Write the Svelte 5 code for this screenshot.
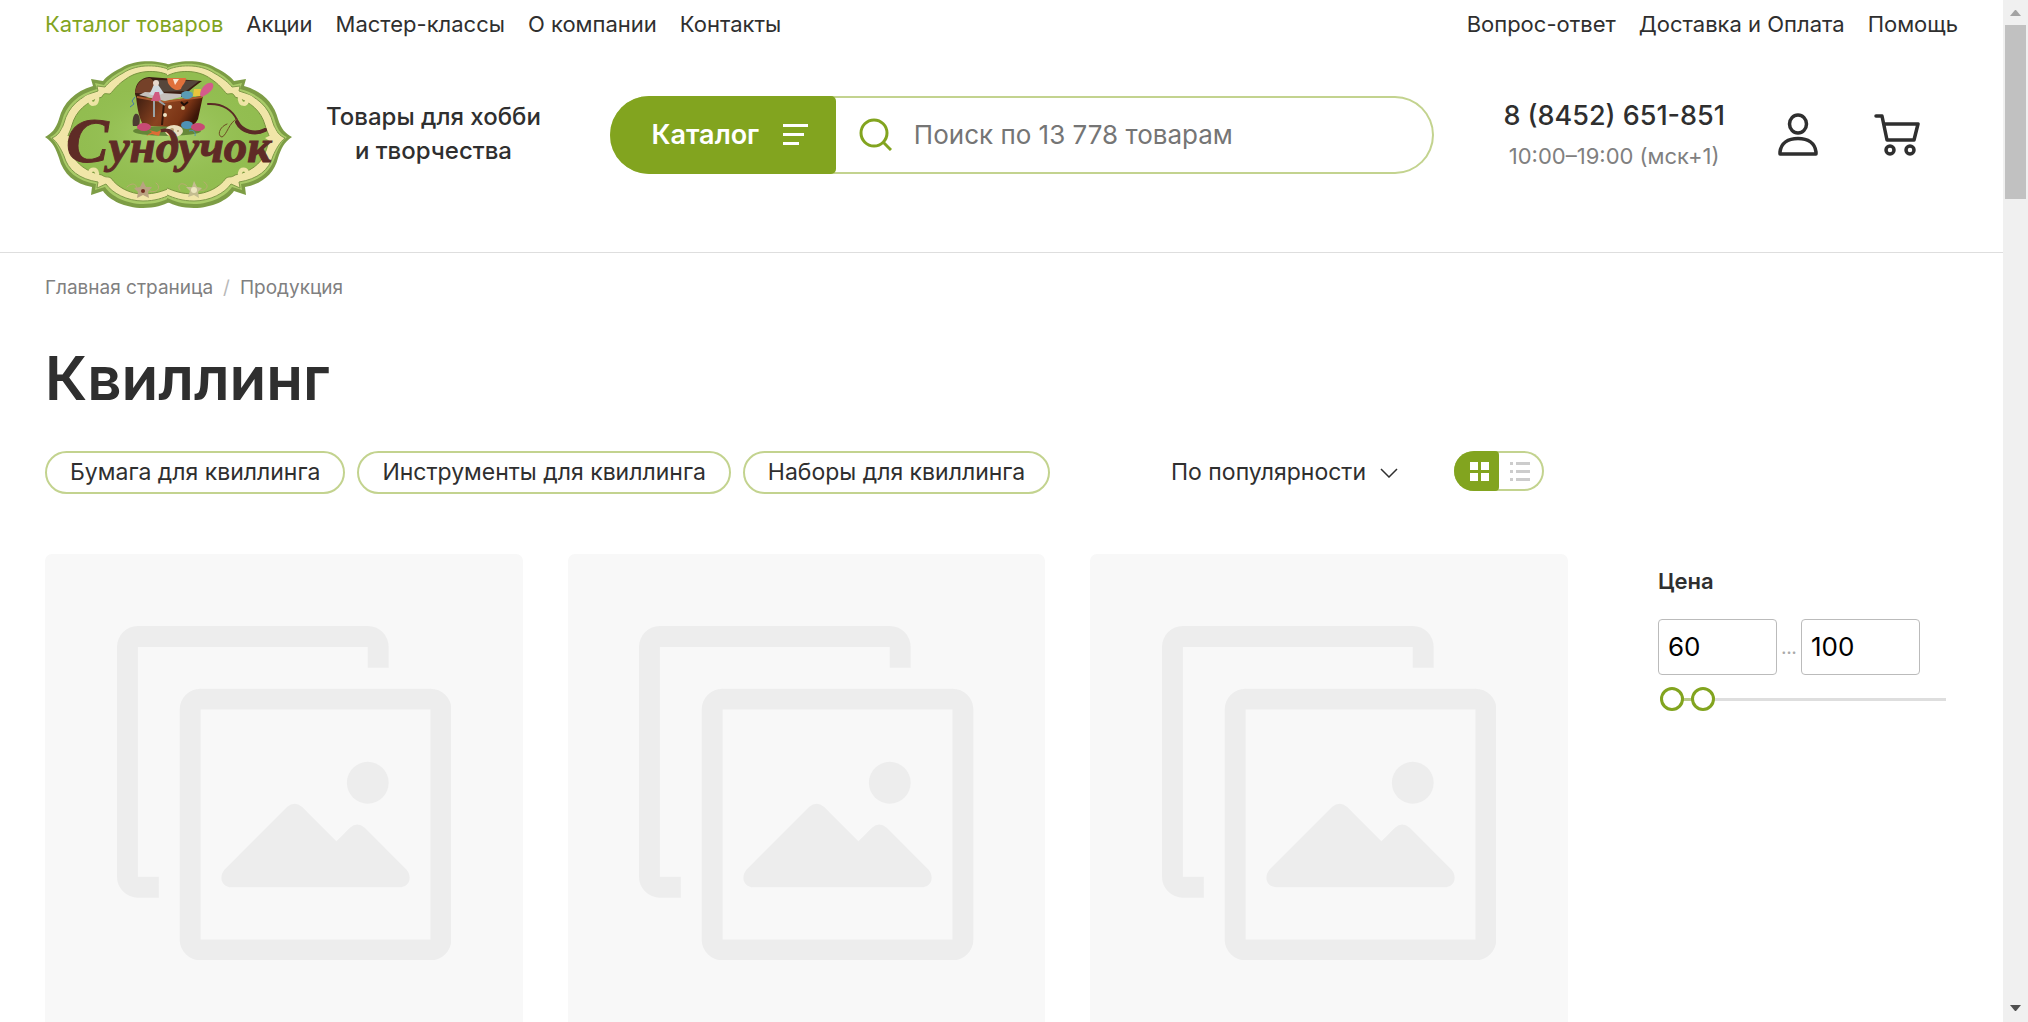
<script>
  const mainLinks = ['Каталог товаров', 'Акции', 'Мастер-классы', 'О компании', 'Контакты'];
  const helpLinks = ['Вопрос-ответ', 'Доставка и Оплата', 'Помощь'];
  const tags = ['Бумага для квиллинга', 'Инструменты для квиллинга', 'Наборы для квиллинга'];
  const products = [1, 2, 3];

  let view = $state('grid');
  let sliderFrom = $state(0);
  let sliderTo = $state(12);
</script>

{#snippet plaqueHalf()}
  <path d="M125 4C116 0 92 -3 76 7C66 12 61 16 58 20L46 18L48 25C30 30 18 42 14 58C11 68 6 73 0 76C8 81 11 88 14 97C18 113 30 123 47 126L46 134L58 130C64 139 80 147 98 147C110 147 118 144 125 141" fill="#7d9d45" />
  <path d="M125 7C115 2 92 0 77 10C67 15 62 20 59 24L50 22L52 28C33 33 21 44 17 60C14 70 10 74 5 76C11 81 14 88 17 96C21 110 32 120 51 123L50 129L60 126C66 135 81 143 98 143C110 143 118 140 125 137" fill="#a9cb68" />
  <path d="M125 9C115 4 93 2 78 12C69 17 63 22 60 26L52 25L53 30C35 35 23 46 19 62C16 71 12 75 7 77C12 81 16 88 19 95C23 109 34 118 53 121L52 127L61 123C67 132 82 140 98 140C110 140 118 137 125 134" fill="#f1e6a8" stroke="#7f9a49" stroke-width="1" />
  <path d="M125 15C115 9 94 8 81 18C73 23 69 29 65 33C61 33 59 31 57 36C41 41 31 50 27 64C26 68 24 72 22 77C24 82 25 88 27 92C31 103 42 111 57 114C61 117 62 115 66 117C72 126 85 133 98 133C110 133 118 130 125 127" fill="#92bd50" stroke="#78943f" stroke-width="1" />
  <path d="M37 42C41 33 54 33 52 39C51 44 46 44 45 40M37 109C41 118 54 118 52 112C51 107 46 108 45 111" fill="none" stroke="#f1e6a8" stroke-width="4" stroke-linecap="round" />
  <path d="M18 66L21 74L27 77L21 81L18 89L12 77Z" fill="#f1e6a8" />
{/snippet}

<div class="window">
  <div class="page">
    <header>
      <nav class="topbar" aria-label="Разделы сайта">
        <ul>
          {#each mainLinks as link, i}
            <li><a href="#top" class:active={i === 0}>{link}</a></li>
          {/each}
        </ul>
        <ul>
          {#each helpLinks as link}
            <li><a href="#top">{link}</a></li>
          {/each}
        </ul>
      </nav>

      <div class="masthead">
        <a class="logo" href="#top" aria-label="Сундучок, на главную">
          <svg viewBox="0 0 247 147" width="247" height="147">
            <defs>
              <linearGradient id="wood" x1="0" y1="0" x2="1" y2="0.3">
                <stop offset="0" stop-color="#3a1c10" />
                <stop offset="0.5" stop-color="#8a4320" />
                <stop offset="0.8" stop-color="#7a3415" />
                <stop offset="1" stop-color="#3b1608" />
              </linearGradient>
              <radialGradient id="glow">
                <stop offset="0" stop-color="#b0d676" stop-opacity="0.8" />
                <stop offset="1" stop-color="#92bd50" stop-opacity="0" />
              </radialGradient>
            </defs>
            <g>{@render plaqueHalf()}</g>
            <g transform="translate(247 0) scale(-1 1)">{@render plaqueHalf()}</g>
            <ellipse cx="123" cy="75" rx="98" ry="58" fill="url(#glow)" />

            <ellipse cx="122" cy="70" rx="34" ry="5" fill="#3d5a1c" opacity="0.6" />
            <path d="M90 33C90 22 96 17 104 16L157 20C152 24 147 27 143 31L140 36L91 36Z" fill="#3a1d12" />
            <path d="M90 32C91 22 97 17 105 17C110 20 112 27 110 33Z" fill="#754129" />
            <path d="M112 19L154 20L141 30L114 31Z" fill="#56463b" />
            <path d="M122 17H141C141 22 137 24 136 28C131 31 126 27 123 22Z" fill="#e0703b" />
            <path d="M128 18L130 24L134 18Z" fill="#fbe3d2" />
            <path d="M91 34L119 40L158 35L153 58C150 64 146 66 141 66L99 65C95 60 92 48 91 34Z" fill="url(#wood)" />
            <path d="M92 35L119 40L119 42L92 37ZM119 40L158 35L157 37L119 42Z" fill="#ab5a2e" />
            <path d="M119 42L117 64" stroke="#35170b" stroke-width="2" />
            <path d="M94 34L120 40L136 36L136 33L100 31Z" fill="#c5c0bb" />
            <path d="M110 22C107 26 107 30 104 33C107 35 115 35 119 32C116 29 114 23 110 22Z" fill="#cfd8de" />
            <path d="M110 31L106 40H116L114 31Z" fill="#d05a80" />
            <circle cx="111" cy="22" r="3" fill="#e7d8cd" />
            <path d="M109 40V56M114 40L120 44" stroke="#9aa3a6" stroke-width="2" />
            <ellipse cx="142" cy="34" rx="6" ry="4" fill="#5a9cb5" />
            <path d="M149 28H156L155 35H148Z" fill="#e8c43c" />
            <path d="M155 34C156 26 162 21 167 22C171 25 166 32 157 36Z" fill="#d45c8b" />
            <circle cx="125" cy="46" r="2" fill="#efe3c4" />
            <circle cx="120" cy="54" r="2" fill="#efe3c4" />
            <path d="M136 41L139 44L143 41" fill="none" stroke="#1f0e07" stroke-width="2" />
            <circle cx="138" cy="47" r="2" fill="#d5c58b" />
            <path d="M90 36L87 40L89 43L85 46" fill="none" stroke="#4a77a8" stroke-width="1" />
            <path d="M90 53C94 51 96 58 94 65H88C87 60 88 55 90 53Z" fill="#4c3c31" />
            <ellipse cx="99" cy="66" rx="7" ry="4" fill="#c84a74" />
            <path d="M101 75L107 71L104 69L112 71L116 69L114 75L107 73Z" fill="#dd6c35" />
            <ellipse cx="129" cy="70" rx="9" ry="6" fill="#eadfbe" />
            <circle cx="127" cy="69" r="2" fill="#b29a6c" />
            <circle cx="133" cy="70" r="1" fill="#b29a6c" />
            <ellipse cx="142" cy="64" rx="6" ry="4" fill="#4e92b4" />
            <ellipse cx="153" cy="66" rx="7" ry="4" fill="#c84a74" />
            <path d="M144 70C148 68 151 71 150 75" fill="none" stroke="#4e92b4" stroke-width="1" />

            <g fill="none" stroke-linecap="round">
              <path d="M163 43C178 42 188 50 192 59C194 67 202 73 212 72C219 71 222 68 220 68" stroke="#5b2a26" stroke-width="2" />
              <path d="M192 61C197 71 210 74 220 69" stroke="#5b2a26" stroke-width="4" />
              <path d="M192 58C184 61 182 74 177 76C172 75 174 66 182 63" stroke="#6d4b24" stroke-width="1" />
              <path d="M82 126C88 120 93 124 91 128M105 130C112 133 117 126 111 122M135 129C131 124 137 120 142 125M155 129C160 131 166 125 159 121" stroke="#b9ad72" stroke-width="1" />
            </g>
            <g fill="#b9a381">
              <path d="M98 120L101 126L107 126L103 131L104 137L98 134L92 137L93 131L89 127L95 126Z" />
              <path d="M149 120L152 126L157 127L153 131L154 137L149 134L143 136L145 130L141 126L147 126Z" fill="#c4bd90" />
            </g>
            <circle cx="98" cy="130" r="2" fill="#742f22" />
            <circle cx="149" cy="129" r="3" fill="#ece6bd" />

            <g class="wordmark">
              <text x="21" y="101"><tspan class="capital">С</tspan><tspan>ундучок</tspan></text>
            </g>
          </svg>
        </a>

        <p class="tagline">Товары для хобби<br />и творчества</p>

        <form class="search" role="search" onsubmit={(e) => e.preventDefault()}>
          <button class="catalog" type="button">
            Каталог
            <svg viewBox="0 0 25 21" width="25" height="21" aria-hidden="true">
              <path d="M0 0H25V3H0ZM0 9H21V12H0ZM0 18H16V21H0Z" fill="#fff" />
            </svg>
          </button>
          <button class="find" type="submit" aria-label="Найти">
            <svg viewBox="0 0 33 33" width="33" height="33">
              <circle cx="15" cy="15" r="13" />
              <path d="M24 24L32 32" />
            </svg>
          </button>
          <input type="search" placeholder="Поиск по 13 778 товарам" aria-label="Поиск по товарам" />
        </form>

        <div class="contacts">
          <a href="tel:88452651851">8 (8452) 651-851</a>
          <span>10:00–19:00 (мск+1)</span>
        </div>

        <a class="account" href="#account" aria-label="Личный кабинет">
          <svg viewBox="0 0 40 43" width="40" height="43">
            <ellipse cx="20" cy="11" rx="8.5" ry="9" />
            <path d="M2 41V39C3 30 10 25.5 20 25.5C30 25.5 37 30 38 39V41Z" />
          </svg>
        </a>
        <a class="cart" href="#cart" aria-label="Корзина">
          <svg viewBox="0 0 46 43" width="46" height="43">
            <path d="M2 3H8L13 27H40L44 11H10" />
            <circle cx="16" cy="37" r="4" />
            <circle cx="36" cy="37" r="4" />
          </svg>
        </a>
      </div>
    </header>

    <div class="content">
      <nav class="crumbs" aria-label="Навигация">
        <a href="#top">Главная страница</a><i>/</i><a href="#top">Продукция</a>
      </nav>
      <h1>Квиллинг</h1>

      <div class="layout">
        <main>
          <div class="toolbar">
            <div class="tags">
              {#each tags as tag}
                <a href="#top">{tag}</a>
              {/each}
            </div>
            <div class="sort">
              <select aria-label="Сортировка">
                <option>По популярности</option>
                <option>По цене</option>
                <option>По названию</option>
              </select>
              <svg viewBox="0 0 18 10" width="18" height="10" aria-hidden="true"><path d="M1 1L9 9L17 1" /></svg>
            </div>
            <div class="views">
              <button type="button" aria-label="Плитка" aria-pressed={view === 'grid'} onclick={() => (view = 'grid')}>
                <svg viewBox="0 0 19 19" width="19" height="19"><path d="M0 0H8V8H0ZM11 0H19V8H11ZM0 11H8V19H0ZM11 11H19V19H11Z" /></svg>
              </button>
              <button type="button" aria-label="Список" aria-pressed={view === 'list'} onclick={() => (view = 'list')}>
                <svg viewBox="0 0 20 19" width="20" height="19"><path d="M0 0H3V3H0ZM6 0H20V3H6ZM0 8H3V11H0ZM6 8H20V11H6ZM0 16H3V19H0ZM6 16H20V19H6Z" /></svg>
              </button>
            </div>
          </div>

          <div class="products">
            {#each products as id (id)}
              <a class="product" href="#product-{id}" aria-label="Товар без фото">
                <svg viewBox="0 0 16 16" aria-hidden="true">
                  <path d="M1 0H12A1 1 0 0 1 13 1V2H12V1H1V12H2V13H1A1 1 0 0 1 0 12V1A1 1 0 0 1 1 0Z" />
                  <path fill-rule="evenodd" d="M4 3H15A1 1 0 0 1 16 4V15A1 1 0 0 1 15 16H4A1 1 0 0 1 3 15V4A1 1 0 0 1 4 3ZM4 4V15H15V4Z" />
                  <circle cx="12" cy="7.5" r="1" />
                  <path d="M5.15 11.65L8.15 8.65Q8.5 8.35 8.85 8.65L10.5 10.3L11.15 9.65Q11.5 9.35 11.85 9.65L13.85 11.65C14.15 12 14 12.5 13.5 12.5H5.5C5 12.5 4.85 12 5.15 11.65Z" />
                </svg>
              </a>
            {/each}
          </div>
        </main>

        <aside>
          <h2>Цена</h2>
          <div class="range">
            <input type="text" inputmode="numeric" value="60" aria-label="Цена от" />
            <span>...</span>
            <input type="text" inputmode="numeric" value="100" aria-label="Цена до" />
          </div>
          <div class="slider">
            <div class="rail"><div class="fill" style="margin-left: {sliderFrom}%; width: {sliderTo - sliderFrom}%"></div></div>
            <input type="range" aria-label="Минимальная цена" bind:value={sliderFrom} />
            <input type="range" aria-label="Максимальная цена" bind:value={sliderTo} />
          </div>
        </aside>
      </div>
    </div>
  </div>

  <div class="scrollbar" aria-hidden="true">
    <svg viewBox="0 0 11 6" width="11" height="6"><path d="M0 6L5 0H6L11 6Z" fill="#a3a3a3" /></svg>
    <div class="thumb"></div>
    <svg viewBox="0 0 11 6" width="11" height="6"><path d="M0 0L5 6H6L11 0Z" fill="#505050" /></svg>
  </div>
</div>

<style>
  :global(body) {
    margin: 0;
    background: #fff;
    color: #2f2f2f;
    font-family: Inter, Roboto, sans-serif;
    font-size: 23px;
  }
  .window {
    display: grid;
    grid-template-columns: minmax(0, 1fr) 25px;
    height: 100vh;
    overflow: hidden;
  }
  .page {
    overflow: hidden;
  }
  a {
    color: inherit;
    text-decoration: none;
  }
  button,
  input,
  select {
    font: inherit;
    color: inherit;
    margin: 0;
    outline: none;
  }
  button {
    padding: 0;
    border: 0;
    background: none;
    cursor: pointer;
  }
  svg {
    display: block;
  }

  header {
    padding: 0 45px;
    border-bottom: 1px solid #dedede;
  }
  .topbar,
  .topbar ul {
    display: flex;
    align-items: center;
  }
  .topbar {
    justify-content: space-between;
    height: 48px;
    font-size: 22px;
  }
  .topbar ul {
    gap: 23px;
    margin: 0;
    padding: 0;
    list-style: none;
  }
  .active {
    color: #82a41f;
  }
  .masthead {
    display: flex;
    align-items: center;
    padding: 13px 38px 44px 0;
  }
  .wordmark {
    fill: #5f2b26;
    stroke: #5f2b26;
    font: italic bold 47px 'Liberation Serif', serif;
  }
  .capital {
    font-size: 64px;
  }
  .tagline {
    margin: 0 69px 0 34px;
    padding-bottom: 2px;
    font-size: 24px;
    font-weight: 500;
    line-height: 34px;
    text-align: center;
    white-space: nowrap;
  }
  .search {
    display: flex;
    flex: 1;
    box-sizing: border-box;
    height: 78px;
    border-radius: 39px;
    box-shadow: inset 0 0 0 2px #c3d38f;
    font-size: 26px;
  }
  .catalog {
    display: flex;
    align-items: center;
    justify-content: center;
    gap: 24px;
    width: 226px;
    padding-left: 14px;
    border-radius: 39px 5px 5px 39px;
    background: #82a41f;
    color: #fff;
    font-size: 27px;
    font-weight: 600;
  }
  .find {
    padding: 0 22px 0 23px;
  }
  .find svg {
    fill: none;
    stroke: #82a41f;
    stroke-width: 3;
  }
  .search input {
    flex: 1;
    min-width: 0;
    padding: 0;
    border: 0;
    background: none;
  }
  .search input::placeholder {
    color: #757575;
    opacity: 1;
  }
  .contacts {
    display: flex;
    flex-direction: column;
    align-items: center;
    gap: 6px;
    margin: 0 53px 0 69px;
    padding-top: 2px;
    line-height: 34px;
    white-space: nowrap;
  }
  .contacts a {
    font-size: 27px;
    font-weight: 500;
  }
  .contacts span {
    color: #808080;
    font-size: 22px;
  }
  .account,
  .cart {
    fill: none;
    stroke: #2f2f2f;
    stroke-width: 3.5;
    stroke-linejoin: round;
    stroke-linecap: round;
  }
  .cart {
    margin-left: 56px;
  }

  .content {
    padding: 23px 45px 45px;
  }
  .crumbs {
    display: flex;
    gap: 10px;
    color: #808080;
    font-size: 19px;
    line-height: 24px;
  }
  .crumbs i {
    color: #b8b8b8;
    font-style: normal;
  }
  h1 {
    margin: 42px 0 37px;
    font-size: 60px;
    font-weight: 600;
    line-height: 72px;
  }
  .layout {
    display: grid;
    grid-template-columns: minmax(0, 1fr) 300px;
    gap: 90px;
  }
  .toolbar {
    display: flex;
    height: 43px;
    margin-bottom: 60px;
    padding-right: 24px;
    line-height: 39px;
    white-space: nowrap;
  }
  .tags {
    display: flex;
    flex: 1;
    gap: 12px;
  }
  .tags a {
    padding: 0 23px;
    border: 2px solid #c3d38f;
    border-radius: 22px;
  }
  .sort {
    display: grid;
    align-items: center;
    margin-right: 56px;
  }
  .sort select,
  .sort svg {
    grid-area: 1 / 1;
  }
  .sort select {
    padding: 0 32px 0 0;
    border: 0;
    background: none;
    appearance: none;
  }
  .sort svg {
    justify-self: end;
    fill: none;
    stroke: #2f2f2f;
    stroke-width: 1.5;
    pointer-events: none;
  }
  .views {
    display: flex;
    height: 40px;
    border-radius: 20px;
    box-shadow: inset 0 0 0 2px #c3d38f;
  }
  .views button {
    display: grid;
    place-items: center;
    width: 45px;
    fill: #ccc;
  }
  .views button:first-child {
    padding-left: 6px;
    border-radius: 20px 4px 4px 20px;
  }
  .views button:last-child {
    padding-right: 4px;
    border-radius: 4px 20px 20px 4px;
  }
  .views button[aria-pressed='true'] {
    background: #82a41f;
    fill: #fff;
  }
  .products {
    display: grid;
    grid-template-columns: repeat(3, minmax(0, 1fr));
    gap: 45px;
  }
  .product {
    display: grid;
    place-items: center;
    aspect-ratio: 1;
    border-radius: 7px;
    background: #f8f8f8;
    fill: #ededed;
  }
  .product svg {
    width: 70%;
  }

  aside {
    padding-top: 113px;
  }
  h2 {
    margin: 0 0 21px;
    font-size: 22px;
    font-weight: 600;
    line-height: 34px;
  }
  .range {
    display: flex;
    color: #aaa;
    font-size: 16px;
    font-weight: 600;
    line-height: 58px;
  }
  .range span {
    width: 24px;
    text-align: center;
  }
  .range input {
    box-sizing: border-box;
    width: 119px;
    height: 56px;
    padding: 0 9px;
    border: 1px solid #bbb;
    border-radius: 4px;
    color: #000;
    font-size: 26px;
    font-weight: 400;
  }
  .slider {
    display: grid;
    align-items: center;
    height: 24px;
    margin: 10px 12px 0 2px;
  }
  .slider > * {
    grid-area: 1 / 1;
  }
  .rail {
    height: 3px;
    padding: 0 12px;
    background: #dedede;
  }
  .fill {
    height: 3px;
    background: #b9c98a;
  }
  .slider input {
    width: 100%;
    height: 24px;
    background: none;
    appearance: none;
    pointer-events: none;
  }
  .slider input::-webkit-slider-thumb {
    box-sizing: border-box;
    width: 24px;
    height: 24px;
    border: 3px solid #82a41f;
    border-radius: 50%;
    background: #fff;
    appearance: none;
    pointer-events: auto;
  }

  .scrollbar {
    display: flex;
    flex-direction: column;
    align-items: center;
    padding: 10px 0 11px;
    background: #f0f0f0;
  }
  .thumb {
    width: 21px;
    height: 174px;
    margin: 9px 0 auto;
    background: #c1c1c1;
  }
</style>
